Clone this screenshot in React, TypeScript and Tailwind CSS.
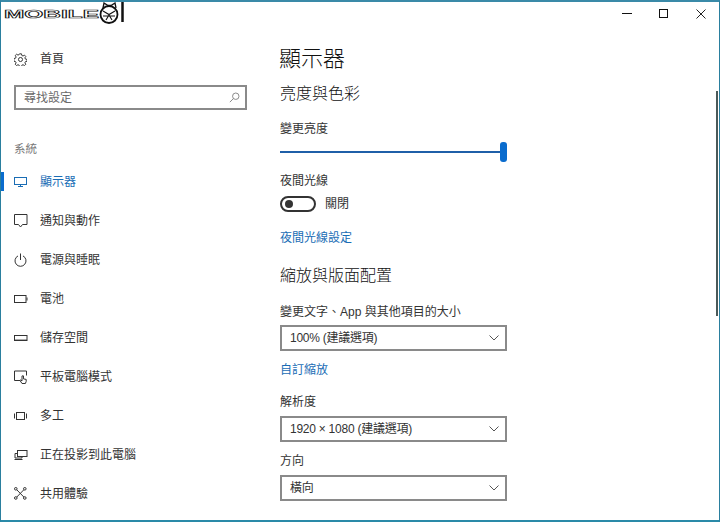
import React from "react";

function Ico({ children }: { children: React.ReactNode }) {
  return (
    <svg width="14" height="14" viewBox="0 0 14 14" fill="none" stroke="currentColor" strokeWidth="1">
      {children}
    </svg>
  );
}

const items: { label: string; icon: React.ReactNode; active?: boolean }[] = [
  { label: "顯示器", active: true, icon: <Ico><rect x="0.5" y="2.500" width="12" height="7" /><path d="M6.500 9.500v2M4 11.500h5" /></Ico> },
  { label: "通知與動作", icon: <Ico><path d="M.5.500h12.500v10h-4.500l-2 2.500-2-2.500h-4z" /></Ico> },
  { label: "電源與睡眠", icon: <Ico><path d="M6.500.500v6.500" /><path d="M4 2.900a5.500 5.500 0 1 0 5 0" /></Ico> },
  { label: "電池", icon: <Ico><rect x="0.500" y="3.500" width="11.500" height="7" /><path d="M13 5.500v3" /></Ico> },
  { label: "儲存空間", icon: <Ico><rect x="0.500" y="4.500" width="12.500" height="5" /><path d="M1 8.500h12" strokeOpacity="0.4" /></Ico> },
  { label: "平板電腦模式", icon: <Ico><path d="M6 10.500h-5.500v-9.500h12v4.500" /><path d="M8 13.500l-2-3 .8-.6 1.200 1v-5h1.500v3l2.700.5v2l-.8 2.100z" /></Ico> },
  { label: "多工", icon: <Ico><rect x="2.500" y="3.500" width="8" height="7" /><path d="M.5 4.500v5M12.500 4.500v5" /></Ico> },
  { label: "正在投影到此電腦", icon: <Ico><rect x="3.500" y="2.500" width="9.500" height="6" /><path d="M3.500 5.500h-2.500v4.500h7v-1.500M.5 11.500h8" /></Ico> },
  { label: "共用體驗", icon: <Ico><circle cx="1.800" cy="1.800" r="1.300" /><circle cx="10.800" cy="1.800" r="1.300" /><circle cx="1.800" cy="11" r="1.300" /><circle cx="10.800" cy="11" r="1.300" /><path d="M2.800 2.800l7 7.200M9.800 2.800l-7 7.200" /></Ico> },
];

function Chevron() {
  return (
    <svg width="10" height="6" viewBox="0 0 10 6" fill="none" stroke="#555" strokeWidth="1">
      <path d="M.5.500l4.500 4.500 4.500-4.500" />
    </svg>
  );
}

function Select({ value }: { value: string }) {
  return (
    <div className="flex h-[26px] w-[227px] items-center justify-between border-2 border-[#8a8a8a] pl-[8px] pr-[6px] text-[12px] tracking-[-0.250px] text-[#333]">
      <span>{value}</span>
      <Chevron />
    </div>
  );
}

function Logo() {
  return (
    <svg width="124" height="24" viewBox="0 0 124 24" fill="none" stroke="#111">
      <text
        x="1"
        y="15.500"
        textLength="95"
        lengthAdjust="spacingAndGlyphs"
        fontSize="11"
        fontWeight="700"
        fontFamily="'Liberation Sans', sans-serif"
        fill="#fff"
        stroke="#111"
        strokeWidth="0.600"
      >
        MOBILE
      </text>
      <circle cx="106" cy="12.500" r="8.500" strokeWidth="1.800" fill="#fff" />
      <path d="M100 6l1-5 4 2.500h3l4-2.500 1 5" strokeWidth="1.300" />
      <path d="M100 9l6 3.500 6-3.500M100 14h12M103 18l3-5 3 5" strokeWidth="1.100" />
      <path d="M119.500 0v20" strokeWidth="2.500" />
    </svg>
  );
}

export default function App() {
  return (
    <div className="flex h-[522px] w-[720px] flex-col overflow-hidden border-x border-b-2 border-t-2 border-x-[#2a7f9e] border-b-[#2a8aa8] border-t-[#3a8aa8] bg-white text-[#333] [font-family:'Liberation_Sans','Noto_Sans_CJK_TC',sans-serif]">
      <div className="flex h-[26px] shrink-0 items-start justify-between">
        <div className="pl-[2px]"><Logo /></div>
        <div className="flex items-center gap-[27px] pr-[13px] pt-[7px]">
          <svg width="10" height="10" viewBox="0 0 10 10" stroke="#111" fill="none"><path d="M0 4.500h10" /></svg>
          <svg width="10" height="10" viewBox="0 0 10 10" stroke="#111" fill="none"><rect x=".5" y=".5" width="8" height="8" /></svg>
          <svg width="10" height="10" viewBox="0 0 10 10" stroke="#222" fill="none"><path d="M.5.500l9 9M9.500.500l-9 9" /></svg>
        </div>
      </div>
      <div className="flex flex-1">
        <aside className="flex w-[279px] shrink-0 flex-col">
          <div className="mt-[15px] flex h-[32px] items-center gap-[13px] pl-[13px] text-[12px]">
            <svg width="13" height="13" viewBox="0 0 16 16" fill="none" stroke="currentColor" strokeWidth="1.200">
              <circle cx="8" cy="8" r="2.500" />
              <path d="M6.800 1h2.400l.4 2 1.500.7 1.800-1.100 1.600 1.700-1.100 1.700.7 1.500 2 .4v2.300l-2 .4-.7 1.500 1.100 1.800-1.700 1.600-1.700-1.100-1.500.7-.4 2H6.800l-.4-2-1.500-.7-1.800 1.100-1.600-1.700 1.100-1.700-.7-1.500-2-.4V6.800l2-.4.7-1.500-1.100-1.800 1.700-1.600 1.700 1.100 1.500-.7z" />
            </svg>
            <span>首頁</span>
          </div>
          <div className="ml-[13px] mt-[10px] flex h-[25px] w-[233px] items-center justify-between border-2 border-[#8a8a8a] pl-[8px] pr-[5px] text-[12px] text-[#6a6a6a]">
            <span>尋找設定</span>
            <svg width="11" height="11" viewBox="0 0 13 13" fill="none" stroke="#777" strokeWidth="1">
              <circle cx="8" cy="5" r="3.800" />
              <path d="M5.200 7.800L1 12" />
            </svg>
          </div>
          <div className="mt-[31px] pl-[13px] text-[11.500px] leading-[16px] text-[#777]">系統</div>
          <nav className="mt-[5px] flex flex-col">
            {items.map((it) => (
              <div
                key={it.label}
                className={`relative flex h-[39px] items-center gap-[12px] pl-[13px] text-[12px] ${
                  it.active ? "text-[#1a6db5]" : "text-[#333]"
                }`}
              >
                {it.active && <span className="absolute left-0 top-[10px] h-[19px] w-[3px] bg-[#0a6cce]" />}
                {it.icon}
                <span>{it.label}</span>
              </div>
            ))}
          </nav>
        </aside>
        <main className="relative flex flex-1 flex-col">
          <h1 className="ml-[-1px] mt-[15px] text-[22px] font-light leading-[32px] text-[#111]">顯示器</h1>
          <h2 className="mt-[8px] text-[16px] font-light leading-[22px] text-[#111]">亮度與色彩</h2>
          <div className="mt-[15px] text-[12px] leading-[18px]">變更亮度</div>
          <div className="mt-[4px] flex h-[20px] w-[227px] items-center">
            <div className="h-[2px] flex-1 bg-[#1f5fa8]" />
            <div className="h-[20px] w-[7px] rounded-[3px] bg-[#0a6cce]" />
          </div>
          <div className="mt-[10px] text-[12px] leading-[18px]">夜間光線</div>
          <div className="mt-[5px] flex items-center gap-[9px]">
            <div className="flex h-[16px] w-[36px] items-center rounded-full border-2 border-[#333] pl-[3px]">
              <div className="h-[8px] w-[8px] rounded-full bg-[#333]" />
            </div>
            <span className="text-[12px]">關閉</span>
          </div>
          <div className="mt-[16px] text-[12px] leading-[18px] text-[#1a6db5]">夜間光線設定</div>
          <h2 className="mt-[18px] text-[16px] font-light leading-[22px] text-[#111]">縮放與版面配置</h2>
          <div className="mt-[16px] text-[12px] leading-[18px]">變更文字、App 與其他項目的大小</div>
          <div className="mt-[4px]"><Select value="100% (建議選項)" /></div>
          <div className="mt-[10px] text-[12px] leading-[18px] text-[#1a6db5]">自訂縮放</div>
          <div className="mt-[14px] text-[12px] leading-[18px]">解析度</div>
          <div className="mt-[5px]"><Select value="1920 × 1080 (建議選項)" /></div>
          <div className="mt-[10px] text-[12px] leading-[18px]">方向</div>
          <div className="mt-[5px]"><Select value="橫向" /></div>
          <div className="absolute right-[1px] top-[63px] h-[225px] w-[2px] bg-[#4a5a5a]" />
        </main>
      </div>
    </div>
  );
}
